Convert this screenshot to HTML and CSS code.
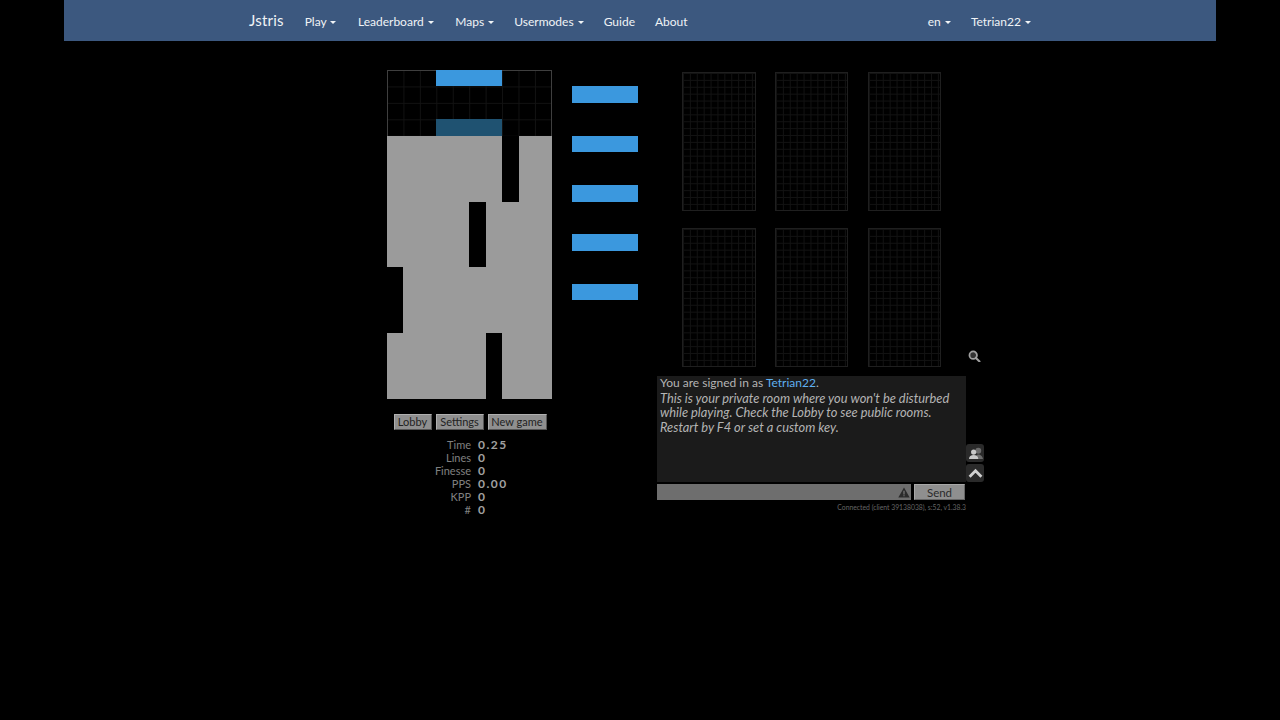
FILE: index.html
```html
<!DOCTYPE html>
<html lang="en">
<head>
<meta charset="utf-8">
<title>Jstris</title>
<link rel="stylesheet" href="styles.css">
</head>
<body>
<nav class="navbar">
  <div class="nav-left">
    <a class="brand">Jstris</a>
    <a class="nav-item nav-play">Play <span class="caret"></span></a>
    <a class="nav-item nav-lead">Leaderboard <span class="caret"></span></a>
    <a class="nav-item">Maps <span class="caret"></span></a>
    <a class="nav-item">Usermodes <span class="caret"></span></a>
    <a class="nav-item">Guide</a>
    <a class="nav-item">About</a>
  </div>
  <div class="nav-right">
    <a class="nav-item">en <span class="caret"></span></a>
    <a class="nav-item">Tetrian22 <span class="caret"></span></a>
  </div>
</nav>
<main class="game">
  <section class="left-col">
    <div class="board">
      <div class="hidden-zone"></div>
      <div class="fill"></div>
      <div class="piece"></div>
      <div class="ghost"></div>
      <div class="well well-a"></div>
      <div class="well well-b"></div>
      <div class="well well-c"></div>
      <div class="well well-d"></div>
    </div>
    <div class="buttons">
      <button class="btn">Lobby</button>
      <button class="btn">Settings</button>
      <button class="btn">New game</button>
    </div>
    <dl class="stats">
      <dt>Time</dt><dd class="wide">0.25</dd>
      <dt>Lines</dt><dd>0</dd>
      <dt>Finesse</dt><dd>0</dd>
      <dt>PPS</dt><dd class="wide">0.00</dd>
      <dt>KPP</dt><dd>0</dd>
      <dt>#</dt><dd>0</dd>
    </dl>
  </section>
  <section class="queue">
    <div class="next"></div>
    <div class="next"></div>
    <div class="next"></div>
    <div class="next"></div>
    <div class="next"></div>
  </section>
  <section class="right-col">
    <div class="slots">
      <div class="slot"></div><div class="slot"></div><div class="slot"></div>
      <div class="slot"></div><div class="slot"></div><div class="slot"></div>
    </div>
    <svg class="zoom-icon" viewBox="0 0 12 12" aria-hidden="true">
      <circle cx="5" cy="5" r="3.6" fill="#333" stroke="#a0a0a0" stroke-width="1.7"/>
      <path d="M7.6 7.6 11 11" stroke="#a0a0a0" stroke-width="2" stroke-linecap="round"/>
    </svg>
    <div class="chat-area">
      <div class="chat">
        <p>You are signed in as <a class="user">Tetrian22</a>.</p>
        <p class="notice">This is your private room where you won't be disturbed<br>while playing. Check the Lobby to see public rooms.<br>Restart by F4 or set a custom key.</p>
      </div>
      <div class="side-buttons">
        <span class="side-btn">
          <svg viewBox="0 0 16 14" aria-hidden="true">
            <circle cx="11" cy="4" r="3.200" fill="#6c6c6c"/>
            <path d="M8 13c0-3 1-5 3-5s5 2 5 5z" fill="#6c6c6c"/>
            <circle cx="6" cy="5.500" r="2.800" fill="#c8c8c8"/>
            <path d="M1 13c0-3 2-4.500 5-4.500S11 10 11 13z" fill="#c8c8c8"/>
          </svg>
        </span>
        <span class="side-btn">
          <svg viewBox="0 0 14 10" aria-hidden="true">
            <path d="M1.500 8 7 2.500 12.500 8" fill="none" stroke="#d0d0d0" stroke-width="2.600"/>
          </svg>
        </span>
      </div>
    </div>
    <div class="chat-input">
      <div class="input">
        <svg class="warn" viewBox="0 0 12 11" aria-hidden="true">
          <path d="M6 .5 11.700 10.500H.3z" fill="#2b2b2b"/>
          <path d="M5.500 3.800h1v3.700h-1zM5.500 8.200h1v1h-1z" fill="#8a8a8a"/>
        </svg>
      </div>
      <button class="send">Send</button>
    </div>
    <p class="status">Connected (client 39138038), s:52, v1.38.3</p>
  </section>
</main>
</body>
</html>
```
FILE: styles.css
```css
* { box-sizing: border-box; }
html, body { margin: 0; padding: 0; background: #000; }
body { font-family: "Lato", "Open Sans", sans-serif; color: #9a9a9a; height: 720px; overflow: hidden; }

.navbar {
  margin: 0 64px;
  height: 41px;
  background: #3c587f;
  display: flex;
  justify-content: space-between;
  padding: 1px 185px 0;
  align-items: center;
  color: #f0f3f6;
}
.nav-left, .nav-right { display: flex; align-items: center; gap: 20px; }
.brand { font-size: 15px; letter-spacing: .2px; margin: -2px 1px 0 0; }
.nav-item { font-size: 12px; white-space: nowrap; }
.nav-play { margin-right: 1.500px; }
.nav-lead { margin-right: 1.500px; }
.caret {
  display: inline-block;
  width: 0; height: 0;
  margin-left: 1px;
  vertical-align: middle;
  border-top: 3px solid currentColor;
  border-left: 3px solid transparent;
  border-right: 3px solid transparent;
}

.game { display: flex; padding: 29px 0 0 387px; align-items: flex-start; }
.left-col { width: 165px; flex: none; }

.board {
  width: 164.500px;
  height: 329px;
  display: grid;
  grid-template-columns: repeat(10, 1fr);
  grid-template-rows: repeat(20, 1fr);
}
.hidden-zone {
  grid-area: 1 / 1 / 5 / 11;
  border: 1px solid #3f3f3f;
  border-bottom: 0;
  background-image:
    linear-gradient(#121212 1px, transparent 1px),
    linear-gradient(90deg, #121212 1px, transparent 1px);
  background-size: 16.450px 16.450px;
  background-position: -1px -1px;
}
.fill { grid-area: 5 / 1 / 21 / 11; background: #9b9b9b; }
.piece { grid-area: 1 / 4 / 2 / 8; background: #3b98de; }
.ghost { grid-area: 4 / 4 / 5 / 8; background: #1f5271; }
.well { background: #000; }
.well-a { grid-area: 5 / 8 / 9 / 9; }
.well-b { grid-area: 9 / 6 / 13 / 7; }
.well-c { grid-area: 13 / 1 / 17 / 2; }
.well-d { grid-area: 17 / 7 / 21 / 8; }

.buttons { display: flex; justify-content: center; gap: 4px; margin-top: 15px; padding-left: 1px; }
.btn {
  height: 16px;
  padding: 0;
  font: 11px "Lato", sans-serif;
  color: #222;
  background: #8f8f8f;
  border: 1px solid;
  border-color: #b0b0b0 #555 #555 #b0b0b0;
  line-height: 14px;
}
.btn:nth-child(1) { width: 38px; }
.btn:nth-child(2) { width: 48px; }
.btn:nth-child(3) { width: 59px; }

.stats {
  display: grid;
  grid-template-columns: 84px auto;
  column-gap: 7px;
  grid-auto-rows: 13px;
  margin: 8px 0 0;
  font-size: 11px;
  line-height: 13px;
  color: #808080;
}
.stats dt { text-align: right; }
.stats dd { margin: 0; font-weight: 700; font-size: 12px; color: #a0a0a0; letter-spacing: .3px; }
.stats dd.wide { letter-spacing: 1.500px; }

.queue {
  margin-left: 20px;
  padding-top: 16.300px;
  width: 66px;
  flex: none;
  display: flex;
  flex-direction: column;
  gap: 32.650px;
}
.next { height: 16.700px; background: #3b98de; }

.right-col { margin-left: 19px; width: 330px; flex: none; position: relative; }
.slots {
  display: grid;
  grid-template-columns: repeat(3, 73.500px);
  grid-auto-rows: 139px;
  column-gap: 19.300px;
  row-gap: 17px;
  margin: 2px 0 0 25px;
}
.slot {
  border: 1px solid #1f1f1f;
  background-image:
    linear-gradient(#121212 1px, transparent 1px),
    linear-gradient(90deg, #121212 1px, transparent 1px);
  background-size: 6.900px 6.900px;
}
.zoom-icon { position: absolute; left: 311px; top: 279.500px; width: 12.500px; height: 12.500px; }

.chat-area { display: flex; margin-top: 9px; align-items: flex-end; }
.chat {
  width: 309px;
  height: 106px;
  flex: none;
  background: #1b1b1b;
  padding: 0 3px;
  color: #b4b4b4;
  font-size: 12px;
  line-height: 14.500px;
}
.chat p { margin: 0; }
.chat .notice { font-size: 12.850px; font-style: italic; }
.user { color: #5fb0f0; }
.side-buttons { display: flex; flex-direction: column; gap: 2px; }
.side-btn {
  width: 18px;
  height: 18px;
  background: #2a2a2a;
  border-radius: 3px;
  display: flex;
  align-items: center;
  justify-content: center;
}
.side-btn svg { width: 15px; height: 13px; }

.chat-input { display: flex; margin-top: 2px; width: 308px; justify-content: space-between; }
.input {
  width: 254px;
  height: 16px;
  background: #6e6e6e;
  display: flex;
  align-items: center;
  justify-content: flex-end;
  padding-right: 1px;
}
.warn { width: 12px; height: 11px; }
.send {
  width: 51px;
  height: 16px;
  padding: 0;
  font: 11.500px "Lato", sans-serif;
  color: #2a2a2a;
  background: #8f8f8f;
  border: 1px solid;
  border-color: #a8a8a8 #666 #666 #a8a8a8;
}
.status {
  margin: 3px 0 0;
  width: 309px;
  text-align: right;
  font-size: 6.800px;
  line-height: 8px;
  color: #666;
}
```
